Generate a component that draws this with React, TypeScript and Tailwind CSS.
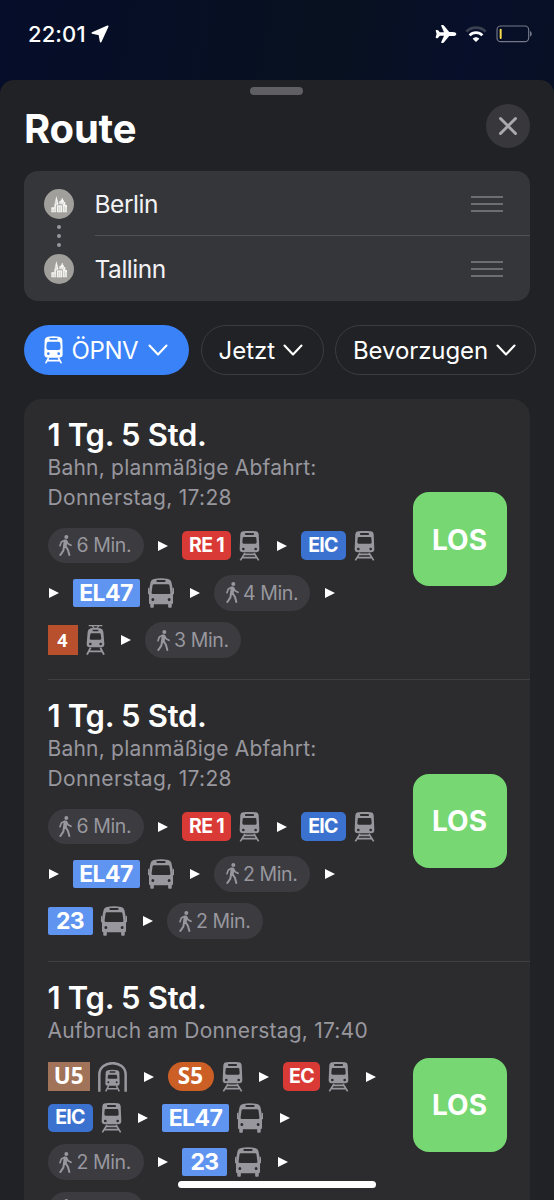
import React from "react";
import { IoAirplane } from "react-icons/io5";

function LocationArrow() {
  return (
    <svg width="18" height="18" viewBox="0 0 54 54" className="fill-white stroke-white" strokeWidth="5" strokeLinejoin="round">
      <path d="M50 4 4 24 25 28 29 50Z" />
    </svg>
  );
}

function Wifi() {
  return (
    <svg width="22" height="17" viewBox="0 0 66 51" fill="none" strokeWidth="8">
      <path d="M4 17C20 1 46 1 62 17" stroke="#3a4050" />
      <path d="M14 28C24 17 42 17 52 28" stroke="#fff" />
      <path d="M33 48 23 38c5-6 15-6 20 0Z" fill="#fff" />
    </svg>
  );
}

function Battery() {
  return (
    <svg width="37" height="18" viewBox="0 0 111 54" fill="none">
      <rect x="3" y="3" width="95" height="47" rx="11" stroke="#74788a" strokeWidth="3.5" />
      <path d="M102 18c7 3 7 14 0 17Z" fill="#74788a" />
      <rect x="11" y="11" width="6" height="31" rx="3" fill="#f8dc4b" />
    </svg>
  );
}

function City() {
  return (
    <div className="flex size-[30px] items-center justify-center rounded-full bg-[#a09f9b]">
      <svg width="17" height="18" viewBox="0 0 51 54" className="fill-[#f4f4f2]">
        <path d="M10 30 16 3l6 22v4h-6v23H1V37h9Z" />
        <path d="M18 31h15v21H18Z" />
        <path d="M25 28V19l4-1V14h3v-4h4v4l3 3v4h4v9h5v22H35V28Z" />
        <path d="M6 42v8M11 41v9M16 33v17M23 35v15M28 35v15M40 33v17M45 37v13M30 22v5M37 22v5M15 18v10" stroke="#a09f9b" strokeWidth="1.2" />
      </svg>
    </div>
  );
}

function Train() {
  return (
    <svg width="21" height="30" viewBox="0 0 63 90" className="shrink-0 fill-[#98979e]">
      <path
        fillRule="evenodd"
        d="M12 1Q31-2 51 1Q58 2 59 9L61 54Q61 64 51 64H12Q2 64 2 54L4 9Q5 2 12 1ZM20 6Q18 6 18 9T20 12H43Q45 12 45 9T43 6ZM14 18Q11 18 11 22L10 34Q10 38 14 38H49Q53 38 53 34L52 22Q52 18 49 18ZM13 50A4 4 0 1 0 13 58A4 4 0 1 0 13 50ZM50 50A4 4 0 1 0 50 58A4 4 0 1 0 50 50Z"
      />
      <path d="M18 66 4 88M45 66 59 88M16 70H47M10 80H53" fill="none" stroke="#98979e" strokeWidth="5" />
    </svg>
  );
}

function Tram() {
  return (
    <svg width="19" height="30" viewBox="0 0 57 90" className="shrink-0 fill-[#98979e]">
      <path d="M8 2H49M18 2 25 11M39 2 32 11" fill="none" stroke="#98979e" strokeWidth="3.500" />
      <path
        fillRule="evenodd"
        d="M14 10Q28 6 43 10Q51 12 52 20L55 57Q55 67 46 67H11Q2 67 2 57L5 20Q6 12 14 10ZM20 14V19H37V14ZM16 25Q13 25 13 28L11 40Q11 44 14 44H43Q46 44 46 40L44 28Q44 25 41 25ZM13 53A4 4 0 1 0 13 61A4 4 0 1 0 13 53ZM44 53A4 4 0 1 0 44 61A4 4 0 1 0 44 53Z"
      />
      <path d="M14 68 3 89M43 68 54 89M9 79H48" fill="none" stroke="#98979e" strokeWidth="5.500" />
    </svg>
  );
}

function Bus() {
  return (
    <svg width="26" height="30" viewBox="0 0 80 90" preserveAspectRatio="none" className="shrink-0 fill-[#98979e]">
      <path
        fillRule="evenodd"
        d="M18 3Q40-2 62 3Q70 5 72 12Q76 27 77 45V74Q77 79 72 79H8Q3 79 3 74V45Q4 27 8 12Q10 5 18 3ZM28 6Q26 6 26 9T28 12H52Q54 12 54 9T52 6ZM18 19Q15 19 14 22L11 44Q11 48 15 48H65Q69 48 69 44L66 22Q65 19 62 19ZM15 60A4.500 4.500 0 1 0 15 69A4.500 4.500 0 1 0 15 60ZM65 60A4.500 4.500 0 1 0 65 69A4.500 4.500 0 1 0 65 60Z"
      />
      <path d="M7 76H18V86Q18 89 15 89H10Q7 89 7 86ZM62 76H73V86Q73 89 70 89H65Q62 89 62 86Z" />
      <rect x="0" y="29" width="4" height="20" rx="2" />
      <rect x="76" y="29" width="4" height="20" rx="2" />
    </svg>
  );
}

function Subway() {
  return (
    <svg width="29" height="30" viewBox="0 0 87 90" className="shrink-0 fill-[#98979e]">
      <path d="M4 89V38C4-8 83-8 83 38V89" fill="none" stroke="#98979e" strokeWidth="7.500" />
      <path
        fillRule="evenodd"
        d="M29 25Q43 22 58 25Q63 26 64 31L65 65Q65 71 59 71H28Q22 71 22 65L23 31Q24 26 29 25ZM35 28V32H52V28ZM33 38Q30 38 30 41L29 47Q29 50 32 50H55Q58 50 58 47L57 41Q57 38 54 38ZM31 58A3 3 0 1 0 31 64A3 3 0 1 0 31 58ZM56 58A3 3 0 1 0 56 64A3 3 0 1 0 56 58Z"
      />
      <path d="M32 71 23 88M55 71 64 88M28 80H59" fill="none" stroke="#98979e" strokeWidth="4.500" />
    </svg>
  );
}

function TransitGlyph() {
  return (
    <svg width="19" height="28" viewBox="0 0 57 84" className="shrink-0 fill-white">
      <path
        fillRule="evenodd"
        d="M12 2Q28-1 45 2Q54 4 55 13L56 55Q56 65 46 65H11Q1 65 1 55L2 13Q3 4 12 2ZM18 6Q16 6 16 8.500T18 11H39Q41 11 41 8.500T39 6ZM14 17Q8 17 8 23L7 35Q7 42 14 42H43Q50 42 50 35L49 23Q49 17 43 17ZM13 49A4 4 0 1 0 13 57A4 4 0 1 0 13 49ZM44 49A4 4 0 1 0 44 57A4 4 0 1 0 44 49Z"
      />
      <path d="M13 67 6 80M44 67 51 80M9 74H48" fill="none" stroke="#fff" strokeWidth="5" strokeLinecap="round" />
    </svg>
  );
}

function Walker() {
  return (
    <svg width="13" height="21" viewBox="0 0 39 63" fill="none" stroke="#98979e" strokeLinecap="round" strokeLinejoin="round" className="shrink-0">
      <circle cx="22" cy="6" r="6" fill="#98979e" stroke="none" />
      <path d="M19.500 19 17.500 34" strokeWidth="11" />
      <path d="M17 16 7 21 3 32M22 17l5 9 9 5" strokeWidth="5" />
      <path d="M20 34l7 11 4 15M15 34l-2 13L4 60" strokeWidth="6" />
    </svg>
  );
}

function Chevron() {
  return (
    <svg width="20" height="12" viewBox="0 0 20 12" fill="none" stroke="#fff" strokeWidth="2.100" strokeLinecap="round" strokeLinejoin="round">
      <path d="m1.500 1.500 8.500 9 8.500-9" />
    </svg>
  );
}

const icons = { train: Train, bus: Bus, tram: Tram, subway: Subway };

const badges: Record<string, string> = {
  "RE 1": "w-[49px] rounded-[5px] bg-[#d93a36] text-[19.500px] font-bold tracking-[-0.7px]",
  EIC: "w-[45px] rounded-[5px] bg-[#3c72cf] text-[19.500px] font-bold tracking-[-0.7px]",
  EC: "w-[37px] rounded-[5px] bg-[#d93a36] text-[19.500px] font-bold tracking-[-0.7px]",
  EL47: "w-[67px] rounded-[2px] bg-[#5f95f0] pt-px text-[23px] font-bold tracking-[-0.6px]",
  "23": "w-[45px] rounded-[2px] bg-[#5f95f0] pt-px text-[23px] font-bold tracking-[-0.6px]",
  "4": "h-[30px] w-[30px] bg-[#b8502e] font-['Noto_Sans',sans-serif] text-[18px] font-bold",
  U5: "w-[42.5px] bg-[#a17359] font-['Noto_Sans',sans-serif] text-[22.500px] font-bold",
  S5: "w-[46px] rounded-full bg-[#cc5f26] font-['Noto_Sans',sans-serif] text-[22.500px] font-bold",
};

type Step = { walk: number } | { line: string; icon: keyof typeof icons } | "next";

function Walk({ minutes }: { minutes: number }) {
  return (
    <div className="flex h-[35.500px] w-24 shrink-0 items-center rounded-full bg-[#3b3b40] pl-[11.500px] text-[#98979e]">
      <Walker />
      <span className="ml-[4.500px] pt-px text-[19.500px] tracking-[-0.4px] whitespace-nowrap">{minutes} Min.</span>
    </div>
  );
}

function StepView({ step }: { step: Step }) {
  if (step === "next") {
    return (
      <svg width="10" height="10" viewBox="0 0 10 10" className="mr-[14px] shrink-0 fill-white">
        <path d="M0 0 10 5 0 10Z" />
      </svg>
    );
  }
  if ("walk" in step) {
    return (
      <div className="mr-[14.500px]">
        <Walk minutes={step.walk} />
      </div>
    );
  }
  const Icon = icons[step.icon];
  return (
    <div className="mr-[16.500px] flex items-center gap-2">
      <div className={"flex h-[28.500px] shrink-0 items-center justify-center leading-none whitespace-nowrap text-white " + badges[step.line]}>
        {step.line}
      </div>
      <Icon />
    </div>
  );
}

const train = (line: string): Step => ({ line, icon: "train" });
const bus = (line: string): Step => ({ line, icon: "bus" });

const routes: { note: string[]; rows: Step[][]; rowClass: string[]; itemClass: string; buttonClass: string }[] = [
  {
    note: ["Bahn, planmäßige Abfahrt:", "Donnerstag, 17:28"],
    rows: [
      [{ walk: 6 }, "next", train("RE 1"), "next", train("EIC")],
      ["next", bus("EL47"), "next", { walk: 4 }, "next"],
      [{ line: "4", icon: "tram" }, "next", { walk: 3 }],
    ],
    rowClass: ["h-[47px]", "h-[47.500px]", "h-[47px]"],
    itemClass: "h-[281px]",
    buttonClass: "mt-[93px]",
  },
  {
    note: ["Bahn, planmäßige Abfahrt:", "Donnerstag, 17:28"],
    rows: [
      [{ walk: 6 }, "next", train("RE 1"), "next", train("EIC")],
      ["next", bus("EL47"), "next", { walk: 2 }, "next"],
      [bus("23"), "next", { walk: 2 }],
    ],
    rowClass: ["h-[47px]", "h-[47.500px]", "h-[47px]"],
    itemClass: "h-[281.500px]",
    buttonClass: "mt-[93.500px]",
  },
  {
    note: ["Aufbruch am Donnerstag, 17:40"],
    rows: [
      [{ line: "U5", icon: "subway" }, "next", train("S5"), "next", train("EC"), "next"],
      [train("EIC"), "next", bus("EL47"), "next"],
      [{ walk: 2 }, "next", bus("23"), "next"],
      [{ walk: 3 }],
    ],
    rowClass: ["h-[43px]", "h-[40px]", "h-[48px]", "h-[47px]"],
    itemClass: "h-[288px]",
    buttonClass: "mt-[96px]",
  },
];

function Handle() {
  return (
    <div className="mr-[27px] flex w-8 flex-col gap-[5px]">
      <div className="h-[2px] bg-[#6d6d72]" />
      <div className="h-[2px] bg-[#6d6d72]" />
      <div className="h-[2px] bg-[#6d6d72]" />
    </div>
  );
}

function Stop({ name, className }: { name: string; className?: string }) {
  return (
    <div className="flex h-[65px] pl-5">
      <div className="flex w-[30px] shrink-0 items-center">
        <City />
      </div>
      <div className={"ml-[20.500px] flex grow items-center justify-between " + (className ?? "")}>
        <span className="text-[24.500px] tracking-[-0.45px] text-[#f2f2f4]">{name}</span>
        <Handle />
      </div>
    </div>
  );
}

export default function App() {
  return (
    <div className="relative flex h-[1200px] w-[554px] flex-col overflow-hidden bg-[linear-gradient(100deg,#050d2a,#07111f_45%,#070f2a_62%,#07111f_85%,#090b29)] font-['Inter',sans-serif] text-white">
      <header className="flex h-20 shrink-0 items-start justify-between pt-[22px] pr-[21px] pl-7">
        <div className="flex items-center gap-[5.500px]">
          <span className="text-[22px] leading-6 font-medium tracking-[0.100px]">22:01</span>
          <LocationArrow />
        </div>
        <div className="flex h-6 items-center">
          <IoAirplane className="mr-[8px] size-[22px]" />
          <Wifi />
          <div className="ml-[9px]">
            <Battery />
          </div>
        </div>
      </header>

      <main className="flex h-[1120px] flex-col rounded-t-[14px] bg-[#212225] px-6 pt-[7px]">
        <div className="-ml-px h-2 w-[53px] shrink-0 self-center rounded-full bg-[#5f5f64]" />
        <div className="mt-[8px] flex h-[45px] shrink-0 items-center justify-between">
          <h1 className="pt-1.5 text-[40px] leading-none font-bold tracking-[-0.2px]">Route</h1>
          <button className="flex size-11 items-center justify-center rounded-full bg-[#38383c]">
            <svg width="20" height="20" viewBox="0 0 20 20" stroke="#a9a9ae" strokeWidth="3" strokeLinecap="round">
              <path d="m2.500 2.500 15 15M17.500 2.500l-15 15" />
            </svg>
          </button>
        </div>

        <section className="relative mt-[23px] h-[130px] shrink-0 rounded-[14px] bg-[#35363a]">
          <Stop name="Berlin" className="border-b border-[#505055] pt-[2px]" />
          <Stop name="Tallinn" className="pt-px" />
          <div className="absolute top-[54px] left-[33px] flex flex-col gap-[5px]">
            <div className="size-1 rounded-full bg-[#98979e]" />
            <div className="size-1 rounded-full bg-[#98979e]" />
            <div className="size-1 rounded-full bg-[#98979e]" />
          </div>
        </section>

        <nav className="mt-[23.500px] -mr-2 flex shrink-0 gap-[11.500px] text-[24px]">
          <button className="flex h-[50.500px] w-[165px] items-center rounded-full bg-[#3a82f7] pt-px pl-[19.500px]">
            <TransitGlyph />
            <span className="ml-[9px] w-[76px] pt-px text-left tracking-[-0.4px]">ÖPNV</span>
            <Chevron />
          </button>
          <button className="flex h-[50.500px] w-[123px] items-center rounded-full border border-[#3c3c40] pt-px pl-[17px]">
            <span className="w-[64px] pt-px text-left">Jetzt</span>
            <Chevron />
          </button>
          <button className="flex h-[50.500px] w-[201px] items-center rounded-full border border-[#3c3c40] pt-px pl-[17px]">
            <span className="w-[142.500px] pt-px text-left tracking-[-0.100px]">Bevorzugen</span>
            <Chevron />
          </button>
        </nav>

        <section className="mt-6 flex shrink-0 flex-col rounded-t-[18px] bg-[#2c2c2e]">
          {routes.map((route, i) => (
            <article key={i} className={"flex justify-between pl-[23.500px] " + route.itemClass}>
              <div className={"flex grow items-start justify-between pr-[23.500px] " + (i < 2 ? "border-b border-[#3f3f42]" : "")}>
                <div className="w-[350px] pt-[17px]">
                  <h2 className="h-[37px] text-[31px] leading-[37px] font-semibold tracking-[-0.3px]">1 Tg. 5 Std.</h2>
                  {route.note.map((text) => (
                    <p key={text} className={"h-[29.500px] text-[21px] leading-[29px] whitespace-nowrap text-[#98979e] " + (text.startsWith("Donnerstag") ? "tracking-[0.320px]" : "tracking-[0.210px]")}>
                      {text}
                    </p>
                  ))}
                  <div className="mt-[10px]">
                    {route.rows.map((row, r) => (
                      <div key={r} className={"flex items-center " + (row[0] === "next" ? "pl-[1px] " : "") + route.rowClass[r]}>
                        {row.map((step, s) => (
                          <StepView key={s} step={step} />
                        ))}
                      </div>
                    ))}
                  </div>
                </div>
                <button className={"-ml-4 size-[94px] shrink-0 rounded-[16px] bg-[#77d873] pt-px text-[28px] font-bold tracking-[0.100px] " + route.buttonClass}>LOS</button>
              </div>
            </article>
          ))}
        </section>
      </main>
      <div className="absolute bottom-3 left-[178px] h-[7.500px] w-[198px] rounded-full bg-white" />
    </div>
  );
}
